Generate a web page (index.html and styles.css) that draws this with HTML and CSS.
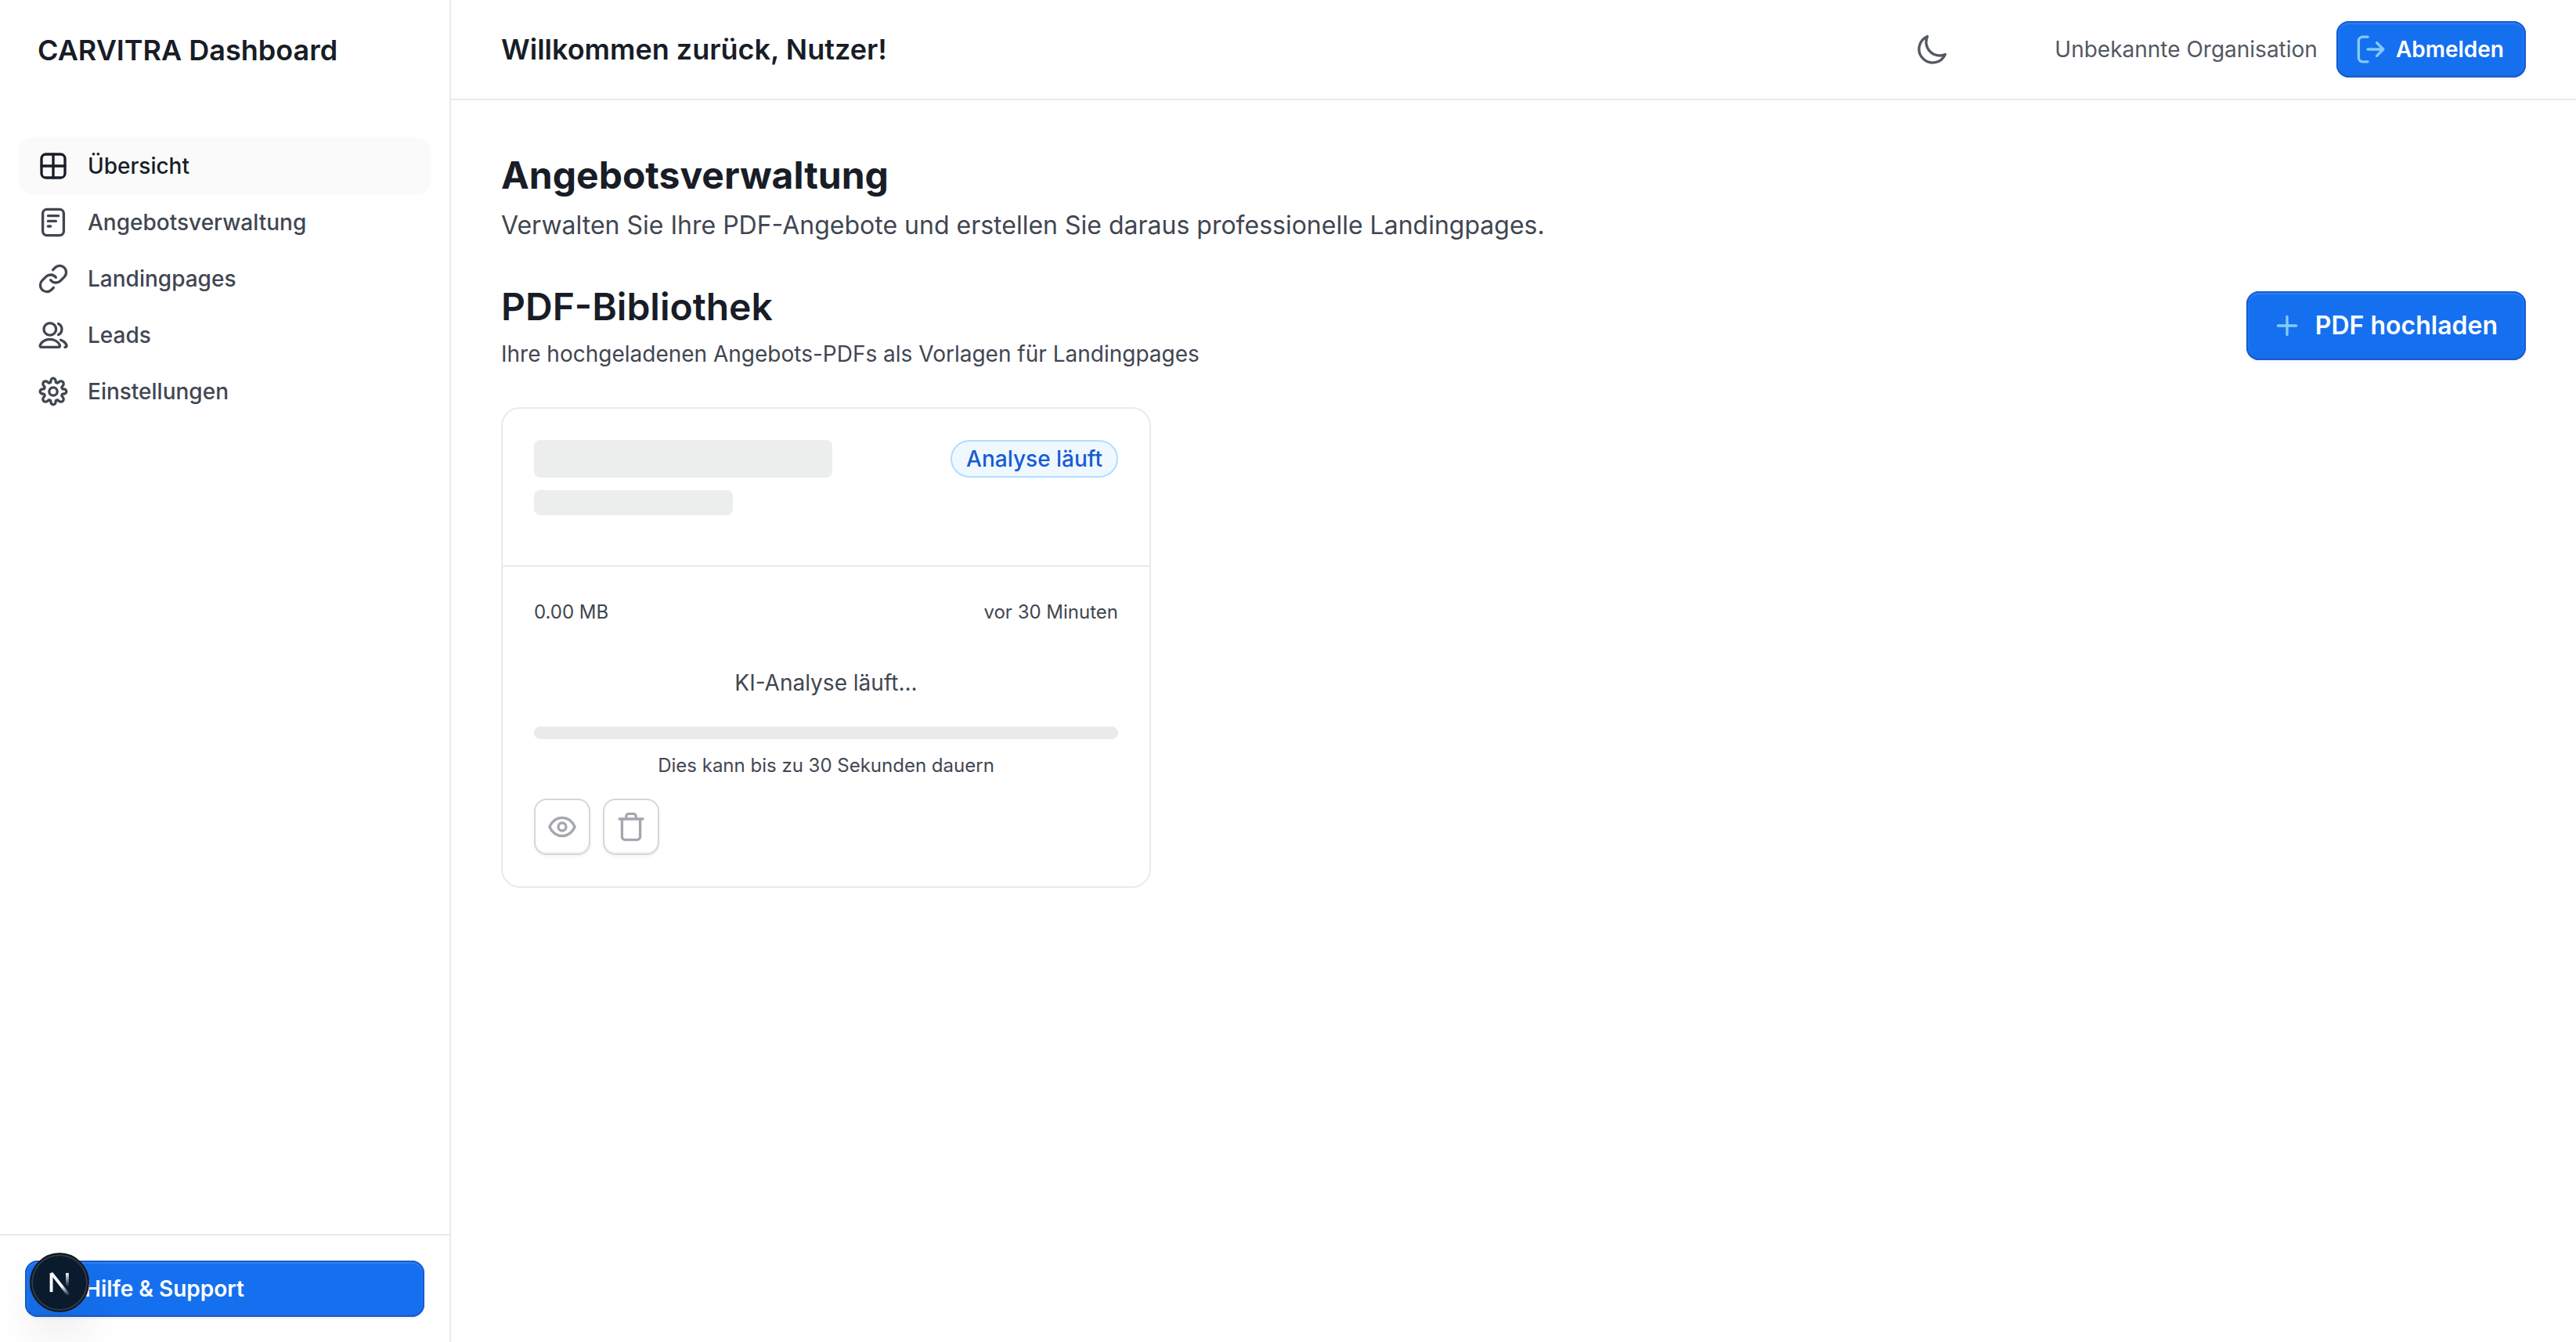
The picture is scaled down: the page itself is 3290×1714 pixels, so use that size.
FILE: index.html
```html
<!DOCTYPE html>
<html lang="de">
<head>
<meta charset="utf-8">
<meta name="viewport" content="width=device-width, initial-scale=1">
<title>CARVITRA Dashboard</title>
<link rel="stylesheet" href="styles.css">
</head>
<body>
<div class="app">
  <aside class="sidebar">
    <div class="brand">CARVITRA Dashboard</div>
    <nav class="nav" aria-label="Hauptnavigation">
      <a class="nav-link active" href="#" aria-current="page">
        <svg class="icon" viewBox="0 0 20 20"><rect x="2.5" y="2.5" width="15" height="15" rx="2.8"/><path d="M10 2.5v15M2.5 10h15"/></svg>
        Übersicht</a>
      <a class="nav-link" href="#">
        <svg class="icon" viewBox="0 0 20 20"><rect x="3.3" y="1.7" width="13.4" height="16.6" rx="2.7"/><path d="M6.7 5.8h6.600M6.7 9.200h5M6.7 12.500h1.600"/></svg>
        Angebotsverwaltung</a>
      <a class="nav-link" href="#">
        <svg class="icon icon-24" viewBox="0 0 24 24"><path d="M10 13a5 5 0 0 0 7.540.540l3-3a5 5 0 0 0-7.070-7.070l-1.720 1.710M14 11a5 5 0 0 0-7.540-.540l-3 3a5 5 0 0 0 7.070 7.070l1.710-1.710"/></svg>
        Landingpages</a>
      <a class="nav-link" href="#">
        <svg class="icon" viewBox="0 0 20 20"><circle cx="7.900" cy="6.200" r="3.900"/><path d="M2.400 17.700c-.7 0-1-.6-.8-1.200C2.600 14.300 5 12.700 7.900 12.700s5.400 1.600 6.300 3.800c.2.600-.1 1.200-.8 1.200zM13.300 2.700c2.900 1.400 2.900 5.600 0 7M14.800 13.100c1.800.700 3.100 1.800 3.700 3.300.3.700-.3 1.300-1 1.300"/></svg>
        Leads</a>
      <a class="nav-link" href="#">
        <svg class="icon" viewBox="0 0 20 20"><circle cx="10" cy="10" r="2.600"/><path d="M8.500 3.100a1.500 1.500 0 0 1 3 0l.2 1.100 1 .4 1-.7a1.500 1.500 0 0 1 2.400 2.400l-.7 1 .4 1 1.100.2a1.500 1.500 0 0 1 0 3l-1.100.2-.4 1 .7 1a1.500 1.500 0 0 1-2.400 2.400l-1-.7-1 .4-.2 1.100a1.500 1.500 0 0 1-3 0l-.2-1.100-1-.4-1 .7a1.500 1.500 0 0 1-2.400-2.400l.7-1-.4-1-1.100-.2a1.500 1.500 0 0 1 0-3l1.100-.2.400-1-.7-1a1.500 1.500 0 0 1 2.400-2.400l1 .7 1-.4z"/></svg>
        Einstellungen</a>
    </nav>
    <div class="sidebar-footer">
      <button class="button button-primary support" type="button">Hilfe &amp; Support</button>
    </div>
  </aside>

  <div class="content">
    <header class="topbar">
      <h1 class="welcome">Willkommen zurück, Nutzer!</h1>
      <div class="topbar-actions">
        <button class="theme-toggle" type="button" aria-label="Dunkles Design">
          <svg class="icon" viewBox="0 0 20 20"><path d="M18.200 13.200A8.700 8.700 0 1 1 6.800 1.800 8.600 8.600 0 0 0 18.200 13.200z"/></svg>
        </button>
        <span class="org">Unbekannte Organisation</span>
        <button class="button button-primary" type="button">
          <svg class="icon" viewBox="0 0 20 20"><path d="M8 17.900H4.700a2.500 2.500 0 0 1-2.500-2.500V4.600a2.500 2.500 0 0 1 2.500-2.500H8M8 10h9.500M13.800 5.800 17.900 10l-4.100 4.200"/></svg>
          Abmelden</button>
      </div>
    </header>

    <main class="main">
      <section class="page-intro">
        <h2 class="page-title">Angebotsverwaltung</h2>
        <p class="page-text">Verwalten Sie Ihre PDF-Angebote und erstellen Sie daraus professionelle Landingpages.</p>
      </section>

      <section class="library">
        <div class="library-head">
          <div>
            <h3 class="library-title">PDF-Bibliothek</h3>
            <p class="library-text">Ihre hochgeladenen Angebots-PDFs als Vorlagen für Landingpages</p>
          </div>
          <button class="button button-primary button-large" type="button">
            <svg class="icon" viewBox="0 0 20 20"><path d="M10 4.200v11.600M4.200 10h11.600"/></svg>
            PDF hochladen</button>
        </div>

        <div class="card-grid">
          <article class="card">
            <div class="card-head">
              <div class="skeletons">
                <div class="skeleton skeleton-title"></div>
                <div class="skeleton skeleton-text"></div>
              </div>
              <span class="badge">Analyse läuft</span>
            </div>
            <div class="card-body">
              <div class="meta"><span>0.00 MB</span><span>vor 30 Minuten</span></div>
              <div class="analysis">
                <p class="analysis-status">KI-Analyse läuft...</p>
                <div class="progress" role="progressbar" aria-label="KI-Analyse"></div>
                <p class="analysis-hint">Dies kann bis zu 30 Sekunden dauern</p>
              </div>
              <div class="card-actions">
                <button class="icon-button" type="button" aria-label="Ansehen">
                  <svg class="icon" viewBox="0 0 20 20"><path d="M1.900 10C3.700 6.200 6.600 4.200 10 4.200s6.300 2 8.100 5.800c-1.800 3.800-4.700 5.800-8.100 5.800S3.700 13.800 1.900 10z"/><circle cx="10" cy="10" r="2.500"/></svg>
                </button>
                <button class="icon-button" type="button" aria-label="Löschen">
                  <svg class="icon" viewBox="0 0 20 20"><path d="M2.500 5h15M4.200 5v11.300a2 2 0 0 0 2 2h7.600a2 2 0 0 0 2-2V5M6.900 5V3.300a1.600 1.600 0 0 1 1.600-1.600h3a1.600 1.600 0 0 1 1.600 1.600V5"/></svg>
                </button>
              </div>
            </div>
          </article>
        </div>
      </section>
    </main>
  </div>
</div>

<button class="dev-badge" type="button" aria-label="Entwicklerwerkzeuge">
  <svg class="dev-logo" viewBox="0 0 40 40">
    <defs>
      <linearGradient id="diag" gradientUnits="userSpaceOnUse" x1="23" y1="24" x2="31" y2="35"><stop stop-color="#fff"/><stop offset="1" stop-color="#fff" stop-opacity="0"/></linearGradient>
      <linearGradient id="stem" gradientUnits="userSpaceOnUse" x1="28" y1="9" x2="28" y2="25"><stop stop-color="#fff"/><stop offset="1" stop-color="#fff" stop-opacity="0"/></linearGradient>
    </defs>
    <path d="M10.500 31V9" stroke="#fff" stroke-width="3.500"/>
    <path d="M10.500 9 31 35" stroke="url(#diag)" stroke-width="3.500"/>
    <path d="M29 9v16" stroke="url(#stem)" stroke-width="3.500"/>
  </svg>
</button>
</body>
</html>
```

FILE: styles.css
```css
*,
*::before,
*::after {
  box-sizing: border-box;
}

:root {
  --text: #181d27;
  --text-muted: #414651;
  --text-soft: #535862;
  --line: #e9eaeb;
  --primary: #1570ef;
  --primary-dark: #175cd3;
}

body {
  margin: 0;
  background: #fff;
  color: var(--text);
  font: 400 28px/40px Inter, "Noto Sans", sans-serif;
}

h1,
h2,
h3,
p {
  margin: 0;
}

button {
  font: inherit;
  color: inherit;
}

.icon {
  flex: none;
  width: 40px;
  height: 40px;
  fill: none;
  stroke: currentColor;
  stroke-width: 1.67;
  stroke-linecap: round;
  stroke-linejoin: round;
}

.icon-24 {
  stroke-width: 2;
}

.app {
  display: flex;
  min-height: 100vh;
}

/* Sidebar */

.sidebar {
  display: flex;
  flex-direction: column;
  flex: none;
  width: 576px;
  border-right: 2px solid var(--line);
}

.brand {
  height: 128px;
  padding: 0 48px;
  font-size: 36px;
  font-weight: 600;
  line-height: 128px;
}

.nav {
  flex: 1;
  padding: 48px 24px;
}

.nav-link {
  display: flex;
  align-items: center;
  gap: 24px;
  height: 72px;
  padding: 0 24px;
  border-radius: 16px;
  color: var(--text-muted);
  font-weight: 500;
  text-decoration: none;
}

.nav-link.active {
  background: #fafafa;
  color: var(--text);
}

.sidebar-footer {
  padding: 32px;
  border-top: 2px solid var(--line);
}

/* Buttons */

.button {
  display: flex;
  align-items: center;
  gap: 12px;
  height: 72px;
  padding: 0 28px 0 24px;
  border: 0;
  border-radius: 16px;
  font-weight: 600;
}

.button-primary {
  background: var(--primary);
  color: #fff;
  box-shadow: inset 0 0 0 2px var(--primary-dark), inset 0 4px 0 rgb(255 255 255 / 8%), inset 0 -4px 0 rgb(10 13 18 / 8%), inset 0 0 0 4px rgb(255 255 255 / 4%), 0 2px 4px rgb(10 13 18 / 5%);
}

.button-primary .icon {
  color: #84caff;
}

.button-large {
  gap: 16px;
  height: 88px;
  padding: 0 36px 0 32px;
  font-size: 32px;
}

.support {
  width: 100%;
  padding-left: 76px;
}

/* Top bar */

.content {
  flex: 1;
  min-width: 0;
}

.topbar {
  display: flex;
  align-items: center;
  justify-content: space-between;
  height: 128px;
  padding: 0 64px;
  border-bottom: 2px solid var(--line);
}

.welcome {
  font-size: 36px;
  font-weight: 600;
}

.topbar-actions {
  display: flex;
  align-items: center;
  gap: 24px;
  color: var(--text-soft);
}

.theme-toggle {
  display: flex;
  margin-right: 112px;
  padding: 0;
  border: 0;
  background: none;
}

/* Main area */

.main {
  padding: 64px;
}

.page-intro {
  margin-bottom: 48px;
}

.page-title {
  font-size: 48px;
  font-weight: 700;
  line-height: 64px;
}

.page-text {
  margin-top: 8px;
  color: var(--text-muted);
  font-size: 32px;
  line-height: 48px;
}

.library-head {
  display: flex;
  align-items: center;
  justify-content: space-between;
  margin-bottom: 48px;
}

.library-title {
  font-size: 48px;
  font-weight: 600;
  line-height: 64px;
}

.library-text {
  margin-top: 8px;
  color: var(--text-muted);
}

.card-grid {
  display: grid;
  grid-template-columns: repeat(3, 1fr);
  gap: 48px;
}

.card {
  border: 2px solid var(--line);
  border-radius: 24px;
}

.card-head {
  display: flex;
  align-items: flex-start;
  justify-content: space-between;
  gap: 24px;
  height: 202px;
  padding: 40px;
  border-bottom: 2px solid var(--line);
}

.skeletons {
  display: grid;
  flex: 1;
  gap: 16px;
}

.skeleton {
  border-radius: 8px;
  background: #eceeed;
}

.skeleton-title {
  width: 75%;
  height: 48px;
}

.skeleton-text {
  width: 50%;
  height: 32px;
}

.badge {
  padding: 2px 18px;
  border: 2px solid #b2ddff;
  border-radius: 24px;
  background: #eff8ff;
  color: var(--primary-dark);
  font-weight: 500;
}

.card-body {
  padding: 40px;
  color: var(--text-muted);
}

.meta {
  display: flex;
  justify-content: space-between;
  font-size: 24px;
  line-height: 36px;
}

.analysis {
  padding: 52px 0 24px;
  text-align: center;
}

.progress {
  height: 16px;
  margin: 36px 0 16px;
  border-radius: 8px;
  background: #e9eaeb;
}

.analysis-hint {
  font-size: 24px;
  line-height: 36px;
}

.card-actions {
  display: flex;
  gap: 16px;
}

.icon-button {
  display: flex;
  align-items: center;
  justify-content: center;
  width: 72px;
  height: 72px;
  padding: 0;
  border: 2px solid #d5d7da;
  border-radius: 16px;
  background: #fff;
  color: #a4a7ae;
  box-shadow: inset 0 -2px 0 rgb(10 13 18 / 5%), 0 2px 4px rgb(10 13 18 / 5%);
}

/* Floating developer badge */

.dev-badge {
  position: fixed;
  bottom: 38px;
  left: 38px;
  display: flex;
  align-items: center;
  justify-content: center;
  width: 76px;
  height: 76px;
  padding: 0;
  border: 2px solid #171717;
  border-radius: 50%;
  background: #0a1b2e;
  box-shadow: inset 0 0 0 2px #2d3b4e, 0 32px 64px -16px rgb(0 0 0 / 24%);
}

.dev-logo {
  width: 44px;
  height: 44px;
  fill: none;
}
```
